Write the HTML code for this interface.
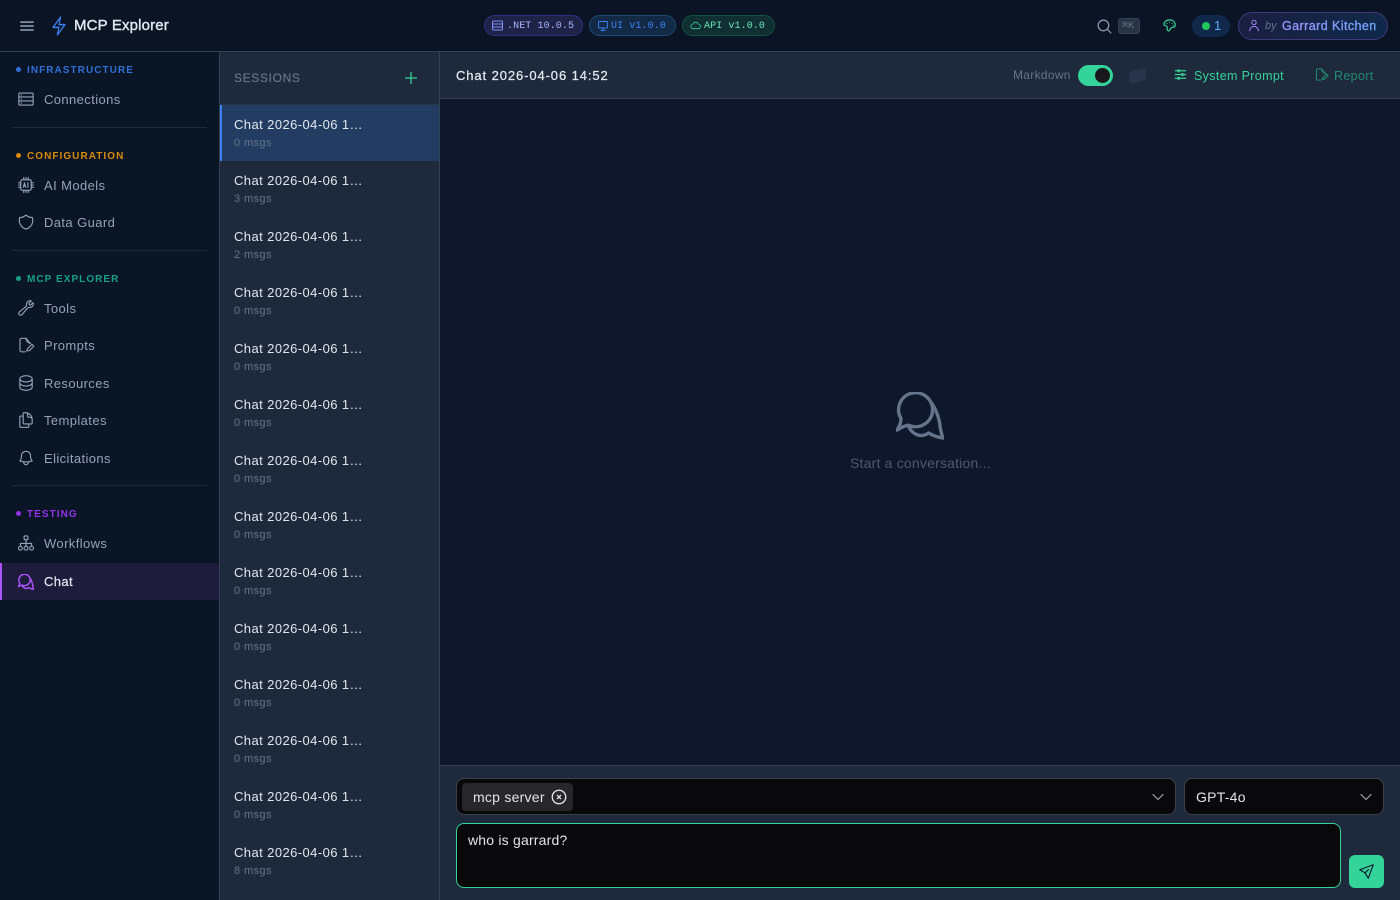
<!DOCTYPE html>
<html><head><meta charset="utf-8"><title>MCP Explorer</title>
<style>
*{box-sizing:border-box}
html,body{margin:0;padding:0;width:1400px;height:900px;overflow:hidden;background:#0f172a;font-family:"Liberation Sans",sans-serif}
.a{position:absolute}
.t{position:absolute;height:20px;line-height:20px;white-space:pre}
svg{position:absolute;fill:none;stroke-linecap:round;stroke-linejoin:round}
.nav{left:44px;font-size:13px;letter-spacing:.4px;color:#94a3b8}
.ic{left:17px;width:18px;height:18px;stroke:#94a3b8;stroke-width:1.5}
.lab{left:27px;font-size:10px;font-weight:700;letter-spacing:1.05px}
.dot{position:absolute;left:16px;width:5px;height:5px;border-radius:50%}
.div{position:absolute;left:12px;width:195px;height:1px;background:#1e293b}
.st{left:234px;font-size:13px;letter-spacing:.42px;color:#e2e8f0}
.ss{left:234px;font-size:11px;letter-spacing:.4px;color:#64748b}
.bdg{position:absolute;top:15px;height:21px;border-radius:11px;border:1px solid}
.bt{top:17px;font-family:"Liberation Mono",monospace;font-size:10px;letter-spacing:.1px}
</style></head><body>

<!-- top bar -->
<div class="a" style="left:0;top:0;width:1400px;height:52px;background:#0a1424;border-bottom:1px solid #334155"></div>
<svg style="left:18px;top:17px;width:18px;height:18px;stroke:#94a3b8;stroke-width:2" viewBox="0 0 24 24"><path d="M3.750 6.750h16.500M3.750 12h16.500m-16.500 5.250h16.500"/></svg>
<svg style="left:47px;top:14px;width:24px;height:24px;stroke:#3b82f6;stroke-width:1.600" viewBox="0 0 24 24"><path d="M3.750 13.500l10.500-11.250L12 10.500h8.250L9.750 21.750 12 13.500H3.750z" transform="translate(3.270 .930) scale(.727 .920)"/></svg>
<div class="t" style="left:74px;top:16px;font-size:15px;letter-spacing:.15px;color:#e2e8f0;-webkit-text-stroke:.4px #e2e8f0">MCP Explorer</div>

<div class="bdg" style="left:484px;width:99px;background:#1e2347;border-color:#312e81"></div>
<svg style="left:492px;top:20px;width:11px;height:11px;stroke:#818cf8;stroke-width:1" viewBox="0 0 11 11"><rect x=".5" y="1" width="10" height="9" rx="1"/><path d="M.5 4h10M.5 7h10"/></svg>
<div class="t bt" style="left:507px;color:#a5b4fc">.NET 10.0.5</div>
<div class="bdg" style="left:589px;width:87px;background:#132a47;border-color:#1e4a6e"></div>
<svg style="left:597px;top:20px;width:12px;height:12px;stroke:#3b82f6;stroke-width:1.800" viewBox="0 0 24 24"><rect x="3" y="3" width="18" height="13" rx="1.500"/><path d="M12 16v5M8 21h8"/></svg>
<div class="t bt" style="left:611px;color:#3b82f6">UI v1.0.0</div>
<div class="bdg" style="left:682px;width:93px;background:#0f2f33;border-color:#14533f"></div>
<svg style="left:690px;top:20px;width:11px;height:11px;stroke:#34d399;stroke-width:1.800" viewBox="0 0 24 24"><path d="M7 19a5 5 0 0 1-.5-10A6 6 0 0 1 18 9a5 5 0 0 1 0 10z"/></svg>
<div class="t bt" style="left:704px;color:#6ee7b7">API v1.0.0</div>

<svg style="left:1096px;top:18px;width:17px;height:17px;stroke:#94a3b8;stroke-width:1.600" viewBox="0 0 24 24"><path d="M21 21l-5.197-5.197m0 0A7.500 7.500 0 105.196 5.196a7.500 7.500 0 0010.607 10.607z"/></svg>
<div class="a" style="left:1118px;top:18px;width:22px;height:16px;border-radius:3px;background:#283344;border:1px solid #334155"></div>
<div class="t" style="left:1122px;top:17px;font-family:'Liberation Mono',monospace;font-size:10px;color:#64748b">⌘K</div>
<svg style="left:1162px;top:18px;width:15px;height:15px;stroke:#34d399;stroke-width:1.900" viewBox="0 0 24 24"><path d="M12 3C7 3 3 6.500 3 11c1.500 1.500 4 1 5 2.500 1.200 1.800-.5 4 .8 6 .8 1.200 2.200 1.700 3.200.5 1-1.500 1-3.500 3-4.500 2-1 5 0 6-2.500C22 7 18 3 12 3z"/><path d="M8 9h.01M12 7h.01M16 9h.01M18 12h.01"/></svg>
<div class="a" style="left:1192px;top:15px;width:38px;height:22px;border-radius:11px;background:#10294a"></div>
<div class="a" style="left:1202px;top:22px;width:8px;height:8px;border-radius:50%;background:#22c55e"></div>
<div class="t" style="left:1214px;top:16px;font-size:13px;color:#60a5fa">1</div>
<div class="a" style="left:1238px;top:12px;width:150px;height:28px;border-radius:14px;background:linear-gradient(90deg,#1a1f42,#10294a);border:1px solid #3f3a7a"></div>
<svg style="left:1247px;top:19px;width:14px;height:14px;stroke:#a78bfa;stroke-width:1.700" viewBox="0 0 24 24"><path d="M15.750 6a3.750 3.750 0 11-7.500 0 3.750 3.750 0 017.500 0zM4.501 20.118a7.500 7.500 0 0114.998 0"/></svg>
<div class="t" style="left:1265px;top:16px;font-size:11px;font-style:italic;color:#64748b">by</div>
<div class="t" style="left:1282px;top:16px;width:96px;font-size:12.500px;letter-spacing:.43px;background:linear-gradient(90deg,#a78bfa,#60a5fa);-webkit-background-clip:text;background-clip:text;color:transparent;-webkit-text-stroke:.25px #7c9cf0">Garrard Kitchen</div>

<!-- sidebar -->
<div class="a" style="left:0;top:52px;width:220px;height:848px;background:#0a1525;border-right:1px solid #334155"></div>
<div class="dot" style="top:67px;background:#2f6fd8"></div><div class="t lab" style="top:61px;color:#2f6fd8">INFRASTRUCTURE</div>
<svg class="ic" style="top:90px" viewBox="0 0 24 24"><rect x="2.500" y="4" width="19" height="16" rx="1"/><path d="M2.500 9.300h19M2.500 14.600h19M5.500 6.700h.5M5.500 12h.5M5.500 17.300h.5"/></svg>
<div class="t nav" style="top:90px">Connections</div>
<div class="div" style="top:127px"></div>

<div class="dot" style="top:153px;background:#d98a0b"></div><div class="t lab" style="top:147px;color:#d98a0b">CONFIGURATION</div>
<svg class="ic" style="top:176px" viewBox="0 0 24 24"><rect x="5" y="5" width="14" height="14" rx="2"/><path d="M9 2v3M12 2v3M15 2v3M9 19v3M12 19v3M15 19v3M2 9h3M2 12h3M2 15h3M19 9h3M19 12h3M19 15h3M8.500 15l1.500-6 1.500 6M9 13.200h2M14.500 9v6"/></svg>
<div class="t nav" style="top:176px">AI Models</div>
<svg class="ic" style="top:213px" viewBox="0 0 24 24"><path d="M12 2.714A11.959 11.959 0 013.598 6 11.990 11.990 0 003 9.749c0 5.592 3.824 10.290 9 11.623 5.176-1.332 9-6.030 9-11.622 0-1.310-.21-2.571-.598-3.751h-.152c-3.196 0-6.100-1.248-8.250-3.285z"/></svg>
<div class="t nav" style="top:213px">Data Guard</div>
<div class="div" style="top:250px"></div>

<div class="dot" style="top:276px;background:#14a08c"></div><div class="t lab" style="top:270px;color:#14a08c">MCP EXPLORER</div>
<svg class="ic" style="top:299px" viewBox="0 0 24 24"><path d="M21.750 6.750a4.500 4.500 0 01-4.884 4.484c-1.076-.091-2.264.071-2.950.904l-7.152 8.684a2.548 2.548 0 11-3.586-3.586l8.684-7.152c.833-.686.995-1.874.904-2.950a4.500 4.500 0 016.336-4.486l-3.276 3.276a3.004 3.004 0 002.250 2.250l3.276-3.276c.256.565.398 1.192.398 1.852z"/></svg>
<div class="t nav" style="top:299px">Tools</div>
<svg class="ic" style="top:336px" viewBox="0 0 24 24"><path d="M11 21H6a2 2 0 0 1-2-2V5a2 2 0 0 1 2-2h6l6 7"/><path d="M12 3c0 4 2 6 6 7"/><path d="M13 20l1-3 6-6 2.500 2.500-6 6z"/></svg>
<div class="t nav" style="top:336px">Prompts</div>
<svg class="ic" style="top:374px" viewBox="0 0 24 24"><path d="M20.250 6.375c0 2.278-3.694 4.125-8.250 4.125S3.750 8.653 3.750 6.375m16.500 0c0-2.278-3.694-4.125-8.250-4.125S3.750 4.097 3.750 6.375m16.500 0v11.250c0 2.278-3.694 4.125-8.250 4.125s-8.250-1.847-8.250-4.125V6.375m16.500 5.600c0 2.278-3.694 4.125-8.250 4.125s-8.250-1.847-8.250-4.125"/></svg>
<div class="t nav" style="top:374px">Resources</div>
<svg class="ic" style="top:411px" viewBox="0 0 24 24"><path d="M15.750 17.250v3.375c0 .621-.504 1.125-1.125 1.125h-9.750a1.125 1.125 0 01-1.125-1.125V7.875c0-.621.504-1.125 1.125-1.125H6.750a9.060 9.060 0 011.500.124m7.500 10.376h3.375c.621 0 1.125-.504 1.125-1.125V11.250c0-4.460-3.243-8.161-7.500-8.876a9.060 9.060 0 00-1.500-.124H9.375c-.621 0-1.125.504-1.125 1.125v3.500m7.500 10.375H9.375a1.125 1.125 0 01-1.125-1.125v-9.250m12 6.625v-1.875a3.375 3.375 0 00-3.375-3.375h-1.500a1.125 1.125 0 01-1.125-1.125v-1.500a3.375 3.375 0 00-3.375-3.375H9.750"/></svg>
<div class="t nav" style="top:411px">Templates</div>
<svg class="ic" style="top:449px" viewBox="0 0 24 24"><path d="M14.857 17.082a23.848 23.848 0 005.454-1.310A8.967 8.967 0 0118 9.750v-.7V9A6 6 0 006 9v.75a8.967 8.967 0 01-2.312 6.022c1.733.64 3.560 1.085 5.455 1.310m5.714 0a24.255 24.255 0 01-5.714 0m5.714 0a3 3 0 11-5.714 0"/></svg>
<div class="t nav" style="top:449px">Elicitations</div>
<div class="div" style="top:485px"></div>

<div class="dot" style="top:511px;background:#9333ea"></div><div class="t lab" style="top:505px;color:#9333ea">TESTING</div>
<svg class="ic" style="top:534px" viewBox="0 0 24 24"><rect x="9.500" y="2.500" width="5" height="5" rx="1"/><circle cx="4.500" cy="19" r="2.600"/><circle cx="12" cy="19" r="2.600"/><circle cx="19.500" cy="19" r="2.600"/><path d="M12 7.500v9M4.500 16.400V12.500h15v3.900"/></svg>
<div class="t nav" style="top:534px">Workflows</div>
<div class="a" style="left:0;top:563px;width:219px;height:37px;background:#1e1b3d;border-left:2px solid #a855f7"></div>
<svg style="left:17.500px;top:573.500px;width:16px;height:16px;stroke:#a855f7;stroke-width:4.400" viewBox="0 0 48 48"><path d="M5 26.500A17 17 0 1 1 12.500 33.200C9 33.700 5 35.500 1 38C3 35 5 31 5 26.500z"/><path d="M35.500 11C39 16 42 23 43.500 30C44 35 45 41 47 46C42 45.500 37 43.500 32.500 41C27 45 18 45 12.500 34.500"/></svg>
<div class="t" style="left:44px;top:572px;font-size:13px;letter-spacing:.4px;color:#e2e8f0;-webkit-text-stroke:.2px">Chat</div>

<!-- sessions -->
<div class="a" style="left:220px;top:52px;width:220px;height:848px;background:#1e293b;border-right:1px solid #334155"></div>
<div class="a" style="left:220px;top:104px;width:219px;height:1px;background:#283548"></div>
<div class="t" style="left:234px;top:68px;font-size:12px;letter-spacing:.65px;color:#64748b;-webkit-text-stroke:.2px">SESSIONS</div>
<svg style="left:402px;top:69px;width:18px;height:18px;stroke:#34d399;stroke-width:1.300" viewBox="0 0 18 18"><path d="M9 3.500v11M3.500 9h11"/></svg>
<div class="a" style="left:220px;top:105px;width:219px;height:56px;background:#233c61;border-left:2px solid #3b82f6"></div>
<div class="t st" style="top:115px">Chat 2026-04-06 1…</div><div class="t ss" style="top:133px">0 msgs</div>
<div class="t st" style="top:171px">Chat 2026-04-06 1…</div><div class="t ss" style="top:189px">3 msgs</div>
<div class="t st" style="top:227px">Chat 2026-04-06 1…</div><div class="t ss" style="top:245px">2 msgs</div>
<div class="t st" style="top:283px">Chat 2026-04-06 1…</div><div class="t ss" style="top:301px">0 msgs</div>
<div class="t st" style="top:339px">Chat 2026-04-06 1…</div><div class="t ss" style="top:357px">0 msgs</div>
<div class="t st" style="top:395px">Chat 2026-04-06 1…</div><div class="t ss" style="top:413px">0 msgs</div>
<div class="t st" style="top:451px">Chat 2026-04-06 1…</div><div class="t ss" style="top:469px">0 msgs</div>
<div class="t st" style="top:507px">Chat 2026-04-06 1…</div><div class="t ss" style="top:525px">0 msgs</div>
<div class="t st" style="top:563px">Chat 2026-04-06 1…</div><div class="t ss" style="top:581px">0 msgs</div>
<div class="t st" style="top:619px">Chat 2026-04-06 1…</div><div class="t ss" style="top:637px">0 msgs</div>
<div class="t st" style="top:675px">Chat 2026-04-06 1…</div><div class="t ss" style="top:693px">0 msgs</div>
<div class="t st" style="top:731px">Chat 2026-04-06 1…</div><div class="t ss" style="top:749px">0 msgs</div>
<div class="t st" style="top:787px">Chat 2026-04-06 1…</div><div class="t ss" style="top:805px">0 msgs</div>
<div class="t st" style="top:843px">Chat 2026-04-06 1…</div><div class="t ss" style="top:861px">8 msgs</div>

<!-- chat header -->
<div class="a" style="left:440px;top:52px;width:960px;height:47px;background:#1e293b;border-bottom:1px solid #334155"></div>
<div class="t" style="left:456px;top:66px;font-size:13px;letter-spacing:.9px;color:#e2e8f0;-webkit-text-stroke:.25px">Chat 2026-04-06 14:52</div>
<div class="t" style="left:1013px;top:65px;font-size:12px;letter-spacing:.3px;color:#64748b">Markdown</div>
<div class="a" style="left:1078px;top:65px;width:35px;height:21px;border-radius:11px;background:#34d399"></div>
<div class="a" style="left:1095px;top:68px;width:15px;height:15px;border-radius:50%;background:#18181b"></div>
<svg style="left:1128px;top:66px;width:20px;height:20px;fill:#27344a;stroke:none" viewBox="0 0 20 20"><path d="M1 6l3-.5 2-1.500 12-2.500v13L3 18l-2-1.500z"/></svg>
<svg style="left:1173px;top:67px;width:15px;height:15px;stroke:#34d399;stroke-width:2" viewBox="0 0 24 24"><path d="M10.500 6h9.750M10.500 6a1.500 1.500 0 11-3 0m3 0a1.500 1.500 0 10-3 0M3.750 6H7.500m3 12h9.750m-9.750 0a1.500 1.500 0 01-3 0m3 0a1.500 1.500 0 00-3 0m-3.750 0H7.500m9-6h3.750m-3.750 0a1.500 1.500 0 01-3 0m3 0a1.500 1.500 0 00-3 0m-9.750 0h9.750"/></svg>
<div class="t" style="left:1194px;top:66px;font-size:12.500px;letter-spacing:.35px;color:#34d399">System Prompt</div>
<svg style="left:1314px;top:67px;width:15px;height:15px;stroke:#208a70;stroke-width:1.700" viewBox="0 0 24 24"><path d="M11 21H6a2 2 0 0 1-2-2V5a2 2 0 0 1 2-2h6l6 7"/><path d="M12 3c0 4 2 6 6 7"/><path d="M13 20l1-3 6-6 2.500 2.500-6 6z"/></svg>
<div class="t" style="left:1334px;top:66px;font-size:12.500px;letter-spacing:.35px;color:#208a70">Report</div>

<!-- empty state -->
<svg style="left:896px;top:392px;width:48px;height:48px;stroke:#64748b;stroke-width:3.400" viewBox="0 0 48 48"><path d="M5 26.500A17 17 0 1 1 12.500 33.200C9 33.700 5 35.500 1 38C3 35 5 31 5 26.500z"/><path d="M35.500 11C39 16 42 23 43.500 30C44 35 45 41 47 46C42 45.500 37 43.500 32.500 41C27 45 18 45 12.500 34.500"/></svg>
<div class="t" style="left:850px;top:453px;font-size:14px;letter-spacing:.2px;color:#4b5a70">Start a conversation...</div>

<!-- composer -->
<div class="a" style="left:440px;top:765px;width:960px;height:135px;background:#1e293b;border-top:1px solid #334155"></div>
<div class="a" style="left:456px;top:778px;width:720px;height:37px;background:#09090b;border:1px solid #3f3f46;border-radius:8px"></div>
<div class="a" style="left:462px;top:783px;width:111px;height:28px;background:#27272a;border-radius:4px"></div>
<div class="t" style="left:473px;top:787px;font-size:14px;letter-spacing:.25px;color:#e4e4e7">mcp server</div>
<svg style="left:550px;top:788px;width:18px;height:18px;stroke:#e4e4e7;stroke-width:1.800" viewBox="0 0 24 24"><path d="M9.750 9.750l4.500 4.500m0-4.500l-4.500 4.500M21 12a9 9 0 11-18 0 9 9 0 0118 0z"/></svg>
<svg style="left:1150px;top:789px;width:16px;height:16px;stroke:#a1a1aa;stroke-width:1.800" viewBox="0 0 24 24"><path d="M19.500 8.250l-7.500 7.500-7.500-7.500"/></svg>
<div class="a" style="left:1184px;top:778px;width:200px;height:37px;background:#09090b;border:1px solid #3f3f46;border-radius:8px"></div>
<div class="t" style="left:1196px;top:787px;font-size:14px;letter-spacing:.25px;color:#e4e4e7">GPT-4o</div>
<svg style="left:1358px;top:789px;width:16px;height:16px;stroke:#a1a1aa;stroke-width:1.800" viewBox="0 0 24 24"><path d="M19.500 8.250l-7.500 7.500-7.500-7.500"/></svg>
<div class="a" style="left:456px;top:823px;width:885px;height:65px;background:#09090b;border:1px solid #34d399;border-radius:8px"></div>
<div class="t" style="left:468px;top:830px;font-size:14px;letter-spacing:.2px;color:#e4e4e7">who is garrard?</div>
<div class="a" style="left:1349px;top:855px;width:35px;height:33px;background:#34d399;border-radius:6px"></div>
<svg style="left:1358px;top:863px;width:17px;height:17px;stroke:#0f172a;stroke-width:1.600" viewBox="0 0 24 24"><path d="M21.500 2.500L2.500 9.500l7.500 4.500 4.500 7.500zM10 14l5-5"/></svg>
</body></html>
